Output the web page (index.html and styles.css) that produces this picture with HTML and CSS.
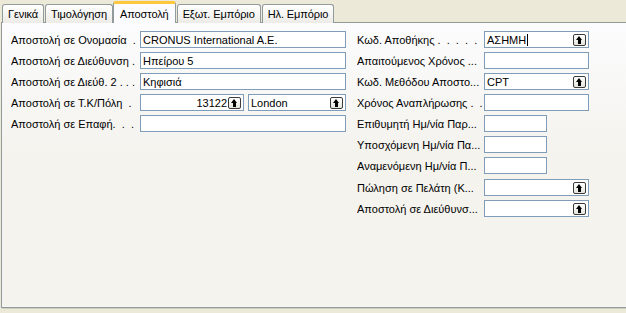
FILE: index.html
```html
<!DOCTYPE html>
<html lang="el">
<head>
  <meta charset="UTF-8" />
  <title>Αποστολή</title>
  <link rel="stylesheet" href="styles.css">
</head>
<body>
  <div class="tabs">
    <div class="tab">Γενικά</div>
    <div class="tab">Τιμολόγηση</div>
    <div class="tab active">Αποστολή</div>
    <div class="tab">Εξωτ. Εμπόριο</div>
    <div class="tab">Ηλ. Εμπόριο</div>
  </div>

  <div class="panel">
    <div class="col left">
      <div class="row">
        <label>Αποστολή σε Ονομασία&nbsp;&nbsp;.</label>
        <div class="field">CRONUS International A.E.</div>
      </div>
      <div class="row">
        <label>Αποστολή σε Διεύθυνση&nbsp;.</label>
        <div class="field">Ηπείρου 5</div>
      </div>
      <div class="row">
        <label>Αποστολή σε Διεύθ. 2&nbsp;.&nbsp;.&nbsp;.</label>
        <div class="field">Κηφισιά</div>
      </div>
      <div class="row">
        <label>Αποστολή σε Τ.Κ/Πόλη&nbsp;&nbsp;.</label>
        <div class="pair">
          <div class="field lookup num"><span class="val">13122</span><span class="btn"></span></div>
          <div class="field lookup"><span class="val">London</span><span class="btn"></span></div>
        </div>
      </div>
      <div class="row gap">
        <label>Αποστολή σε Επαφή.&nbsp;&nbsp;.&nbsp;&nbsp;.</label>
        <div class="field"></div>
      </div>
    </div>

    <div class="col right">
      <div class="row">
        <label>Κωδ. Αποθήκης&nbsp;.&nbsp;&nbsp;.&nbsp;&nbsp;.&nbsp;&nbsp;.&nbsp;&nbsp;.</label>
        <div class="field lookup"><span class="val">ΑΣΗΜΗ<span class="caret"></span></span><span class="btn"></span></div>
      </div>
      <div class="row">
        <label>Απαιτούμενος Χρόνος ...</label>
        <div class="field"></div>
      </div>
      <div class="row">
        <label>Κωδ. Μεθόδου Αποστο...</label>
        <div class="field lookup"><span class="val">CPT</span><span class="btn"></span></div>
      </div>
      <div class="row">
        <label>Χρόνος Αναπλήρωσης .&nbsp;&nbsp;.</label>
        <div class="field"></div>
      </div>
      <div class="row">
        <label>Επιθυμητή Ημ/νία Παρ...</label>
        <div class="field short"></div>
      </div>
      <div class="row">
        <label>Υποσχόμενη Ημ/νία Πα...</label>
        <div class="field short"></div>
      </div>
      <div class="row">
        <label>Αναμενόμενη Ημ/νία Π...</label>
        <div class="field short"></div>
      </div>
      <div class="row gap">
        <label>Πώληση σε Πελάτη (Κ...</label>
        <div class="field lookup"><span class="val"></span><span class="btn"></span></div>
      </div>
      <div class="row">
        <label>Αποστολή σε Διεύθυνσ...</label>
        <div class="field lookup"><span class="val"></span><span class="btn"></span></div>
      </div>
    </div>
  </div>
</body>
</html>
```

FILE: styles.css
```css
* {
  margin: 0;
  padding: 0;
  box-sizing: border-box;
}

body {
  width: 626px;
  height: 313px;
  overflow: hidden;
  background: #ece9d8;
  font-family: 'Liberation Sans', Arial, sans-serif;
  font-size: 11px;
  color: #000;
}

/* tabs */
.tabs {
  display: flex;
  align-items: flex-end;
  height: 23px;
  padding-left: 2px;
}

.tab {
  height: 19px;
  padding: 3px 5px 0;
  margin-right: 1px;
  border: 1px solid #919b9c;
  border-bottom: none;
  border-radius: 3px 3px 0 0;
  background: linear-gradient(#ffffff, #ecebe6);
  white-space: nowrap;
  letter-spacing: -0.1px;
}

.tab.active {
  position: relative;
  z-index: 1;
  height: 22px;
  padding: 4px 6px 0;
  margin: 0 1px 0 -1px;
  border-top: 3px solid #ffc83c;
  background: #fcfcfe;
}

/* panel */
.panel {
  display: flex;
  height: 286px;
  margin-top: -1px;
  margin-left: 1px;
  padding: 8px 0 0 9px;
  border: 1px solid #919b9c;
  border-right: none;
  box-shadow: 1px 1px 0 #d0d0bf;
  background: linear-gradient(#fcfcfe, #f4f3ee 45%);
}

.col.left {
  width: 346px;
}

.row {
  display: flex;
  align-items: center;
  height: 17px;
  margin-bottom: 4px;
}

.row.gap {
  margin-top: 4px;
}

.right .row.gap {
  margin-top: 5px;
}

.row label {
  flex: none;
  width: 129px;
  white-space: nowrap;
  overflow: hidden;
}

.right .row label {
  width: 127px;
}

.field {
  display: flex;
  align-items: center;
  width: 206px;
  height: 17px;
  padding: 0 2px;
  border: 1px solid #7f9db9;
  background: #fff;
  white-space: nowrap;
}

.right .field {
  width: 105px;
}

.right .field.short {
  width: 63px;
}

.pair {
  display: flex;
  gap: 4px;
}

.pair .field {
  width: 104px;
}

.pair .field + .field {
  width: 98px;
}

.field.lookup {
  justify-content: space-between;
  padding-right: 2px;
}

.field.num .val {
  flex: 1;
  text-align: right;
  padding-right: 1px;
}

.caret {
  display: inline-block;
  width: 1px;
  height: 12px;
  margin-left: 1px;
  vertical-align: -2px;
  background: #000;
}

/* lookup button */
.btn {
  flex: none;
  width: 13px;
  height: 12px;
  border: 1px solid #3b3b3b;
  border-radius: 2px;
  background: linear-gradient(#ffffff, #e4e4dc);
  position: relative;
}

.btn::before {
  content: '';
  position: absolute;
  left: 2px;
  top: 1px;
  border-left: 3.5px solid transparent;
  border-right: 3.5px solid transparent;
  border-bottom: 4px solid #000;
}

.btn::after {
  content: '';
  position: absolute;
  left: 4px;
  top: 5px;
  width: 3px;
  height: 4px;
  background: #000;
}
```
